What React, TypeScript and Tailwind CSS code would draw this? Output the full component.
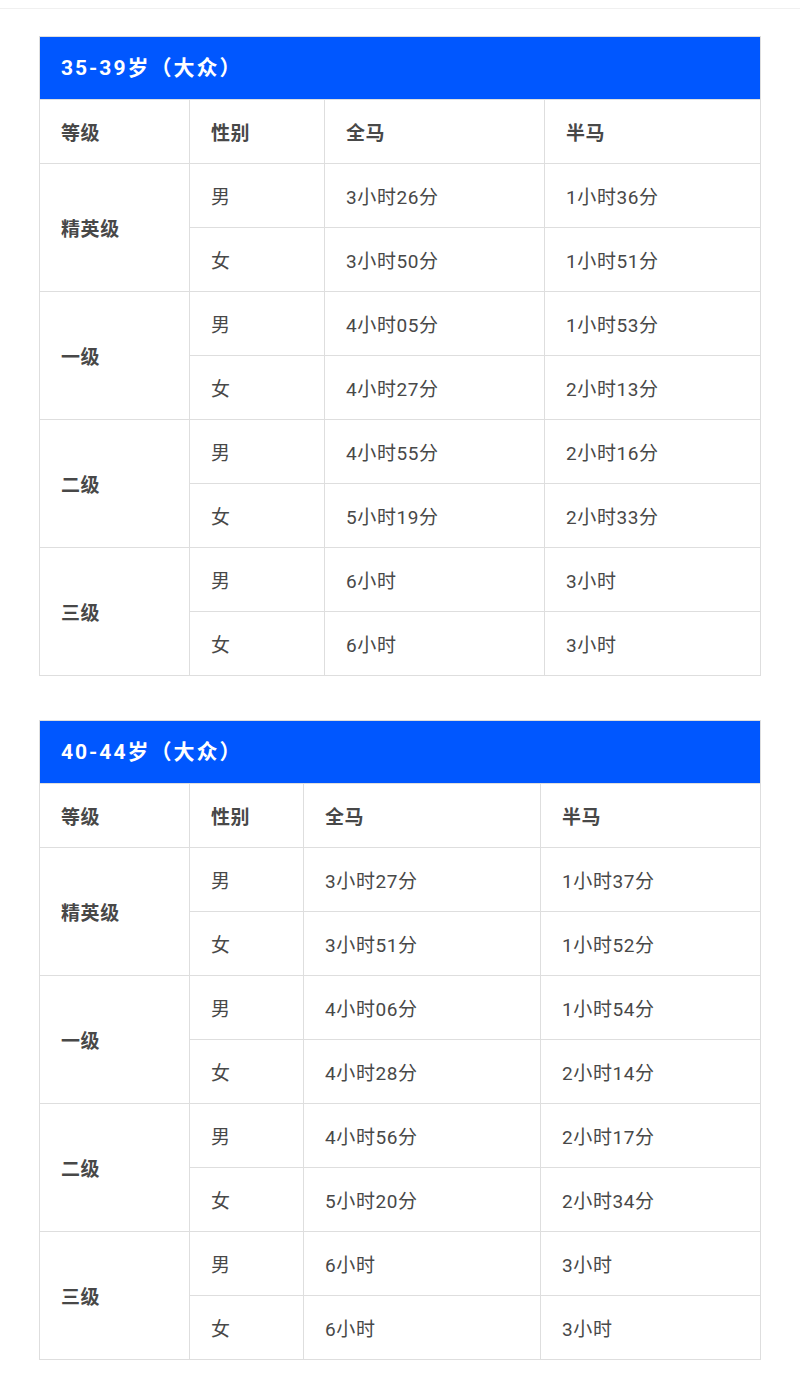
import React from "react"

interface Row {
  level: string
  male: [string, string]
  female: [string, string]
}

interface Section {
  title: string
  widths: [number, number, number, number]
  rows: Row[]
}

const sections: Section[] = [
  {
    title: "35-39岁（大众）",
    widths: [150, 135, 220, 216],
    rows: [
      { level: "精英级", male: ["3小时26分", "1小时36分"], female: ["3小时50分", "1小时51分"] },
      { level: "一级", male: ["4小时05分", "1小时53分"], female: ["4小时27分", "2小时13分"] },
      { level: "二级", male: ["4小时55分", "2小时16分"], female: ["5小时19分", "2小时33分"] },
      { level: "三级", male: ["6小时", "3小时"], female: ["6小时", "3小时"] },
    ],
  },
  {
    title: "40-44岁（大众）",
    widths: [150, 114, 237, 220],
    rows: [
      { level: "精英级", male: ["3小时27分", "1小时37分"], female: ["3小时51分", "1小时52分"] },
      { level: "一级", male: ["4小时06分", "1小时54分"], female: ["4小时28分", "2小时14分"] },
      { level: "二级", male: ["4小时56分", "2小时17分"], female: ["5小时20分", "2小时34分"] },
      { level: "三级", male: ["6小时", "3小时"], female: ["6小时", "3小时"] },
    ],
  },
]

const cell = "h-16 border border-[#dedede] pl-[21px] pr-2 pt-[5px] align-middle text-left"

function AgeTable({ section }: { section: Section }) {
  return (
    <table className="w-[721px] table-fixed border-collapse border border-[#dedede] text-[19px] tracking-[0.6px] text-[#484848]">
      <colgroup>
        {section.widths.map((w, i) => (
          <col key={i} style={{ width: w }} />
        ))}
      </colgroup>
      <thead>
        <tr>
          <th colSpan={4} className="h-[63px] bg-[#0057ff] pl-[21px] pt-[2px] text-left align-middle text-[21px] font-bold tracking-[2px] text-white">
            {section.title}
          </th>
        </tr>
        <tr>
          <th className={`${cell} font-bold`}>等级</th>
          <th className={`${cell} font-bold`}>性别</th>
          <th className={`${cell} font-bold`}>全马</th>
          <th className={`${cell} font-bold`}>半马</th>
        </tr>
      </thead>
      <tbody>
        {section.rows.map((r) => (
          <React.Fragment key={r.level}>
            <tr>
              <td rowSpan={2} className={`${cell} font-bold`}>{r.level}</td>
              <td className={cell}>男</td>
              <td className={cell}>{r.male[0]}</td>
              <td className={cell}>{r.male[1]}</td>
            </tr>
            <tr>
              <td className={cell}>女</td>
              <td className={cell}>{r.female[0]}</td>
              <td className={cell}>{r.female[1]}</td>
            </tr>
          </React.Fragment>
        ))}
      </tbody>
    </table>
  )
}

export default function App() {
  return (
    <div className="min-h-[1393px] w-[800px] bg-white pt-2 font-['Roboto','Noto_Sans_CJK_SC',sans-serif]">
      <div className="h-px w-full bg-[#f0f0f0]" />
      <div className="flex flex-col gap-11 pl-[39px] pt-[27px]">
        {sections.map((s) => (
          <AgeTable key={s.title} section={s} />
        ))}
      </div>
    </div>
  )
}
